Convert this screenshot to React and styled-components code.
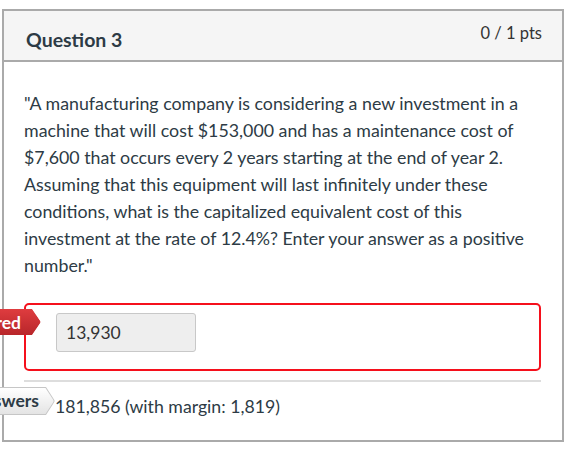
import React from "react";
import styled, { createGlobalStyle } from "styled-components";

const GlobalStyle = createGlobalStyle`
  body {
    margin: 0;
    background: #fff;
    font-family: Lato, "Open Sans", sans-serif;
    color: #2d3b45;
  }
`;

const Card = styled.div`
  width: 558px;
  margin: 9px 0 0 2px;
  border: 2px solid #aaa;
  background: #fff;
`;

const Header = styled.div`
  height: 49px;
  background: #f5f5f5;
  border-bottom: 2px solid #aaa;
  display: flex;
  justify-content: space-between;
  align-items: flex-start;
  padding: 0 20px 0 22px;
`;

const Title = styled.h2`
  margin: 16px 0 0;
  font-size: 19.5px;
  font-weight: 700;
  line-height: 26px;
  color: #2d3b45;
`;

const Points = styled.div`
  margin-top: 11px;
  font-size: 16.5px;
  line-height: 22px;
  color: #333;
`;

const Body = styled.div`
  padding: 28px 21px 21px 20px;
`;

const QuestionText = styled.p`
  margin: 0;
  font-size: 17.8px;
  line-height: 27px;
  color: #2d3b45;
`;

const AnswerBox = styled.div`
  position: relative;
  margin-top: 24px;
  border: 2px solid #f5101c;
  border-radius: 5px;
  padding: 8px 30px 17px;
`;

const Input = styled.div`
  width: 129px;
  height: 37px;
  box-sizing: content-box;
  background: #eee;
  border: 1px solid #c8c8c8;
  border-radius: 3px;
  padding: 0 0 0 9px;
  display: flex;
  align-items: center;
  font-size: 17.5px;
  color: #333;
`;

const TagShape = styled.div`
  position: absolute;
  left: ${({ $left }) => $left}px;
  top: ${({ $top }) => $top}px;
  transform: translateX(-100%);
  height: ${({ $h }) => $h}px;
  box-sizing: border-box;
  padding: ${({ $bordered }) => ($bordered ? "1px" : "0")};
  background: ${({ $bordered }) => ($bordered ? "#c6c6c6" : "transparent")};
  clip-path: polygon(0 0, calc(100% - 9px) 0, 100% 50%, calc(100% - 9px) 100%, 0 100%);
`;

const TagFace = styled.div`
  height: 100%;
  box-sizing: border-box;
  padding: 0 ${({ $red }) => ($red ? 20 : 15)}px 0 10px;
  white-space: nowrap;
  display: flex;
  align-items: center;
  font-size: 17.5px;
  font-weight: 700;
  color: ${({ $red }) => ($red ? "#fff" : "#2d3b45")};
  background: ${({ $red }) =>
    $red
      ? "linear-gradient(#df3c3f, #b8262a)"
      : "linear-gradient(#ffffff, #e4e4e4)"};
  clip-path: polygon(0 0, calc(100% - 8.5px) 0, 100% 50%, calc(100% - 8.5px) 100%, 0 100%);
`;

const Divider = styled.div`
  height: 2px;
  background: #ddd;
  margin-top: 9px;
`;

const CorrectRow = styled.div`
  position: relative;
  padding: 13px 0 0 31px;
  font-size: 17.7px;
  line-height: 24px;
  color: #2d3b45;
`;

export default function App() {
  return (
    <>
      <GlobalStyle />
      <Card>
        <Header>
          <Title>Question 3</Title>
          <Points>0 / 1 pts</Points>
        </Header>
        <Body>
          <QuestionText>
            "A manufacturing company is considering a new investment in a
            machine that will cost $153,000 and has a maintenance cost of
            $7,600 that occurs every 2 years starting at the end of year 2.
            Assuming that this equipment will last infinitely under these
            conditions, what is the capitalized equivalent cost of this
            investment at the rate of 12.4%? Enter your answer as a positive
            number."
          </QuestionText>
          <AnswerBox>
            <TagShape $left={15} $top={4} $h={26}>
              <TagFace $red>You Answered</TagFace>
            </TagShape>
            <Input>13,930</Input>
          </AnswerBox>
          <Divider />
          <CorrectRow>
            <TagShape $left={31} $top={5} $h={28} $bordered>
              <TagFace>Correct Answers</TagFace>
            </TagShape>
            181,856 (with margin: 1,819)
          </CorrectRow>
        </Body>
      </Card>
    </>
  );
}
